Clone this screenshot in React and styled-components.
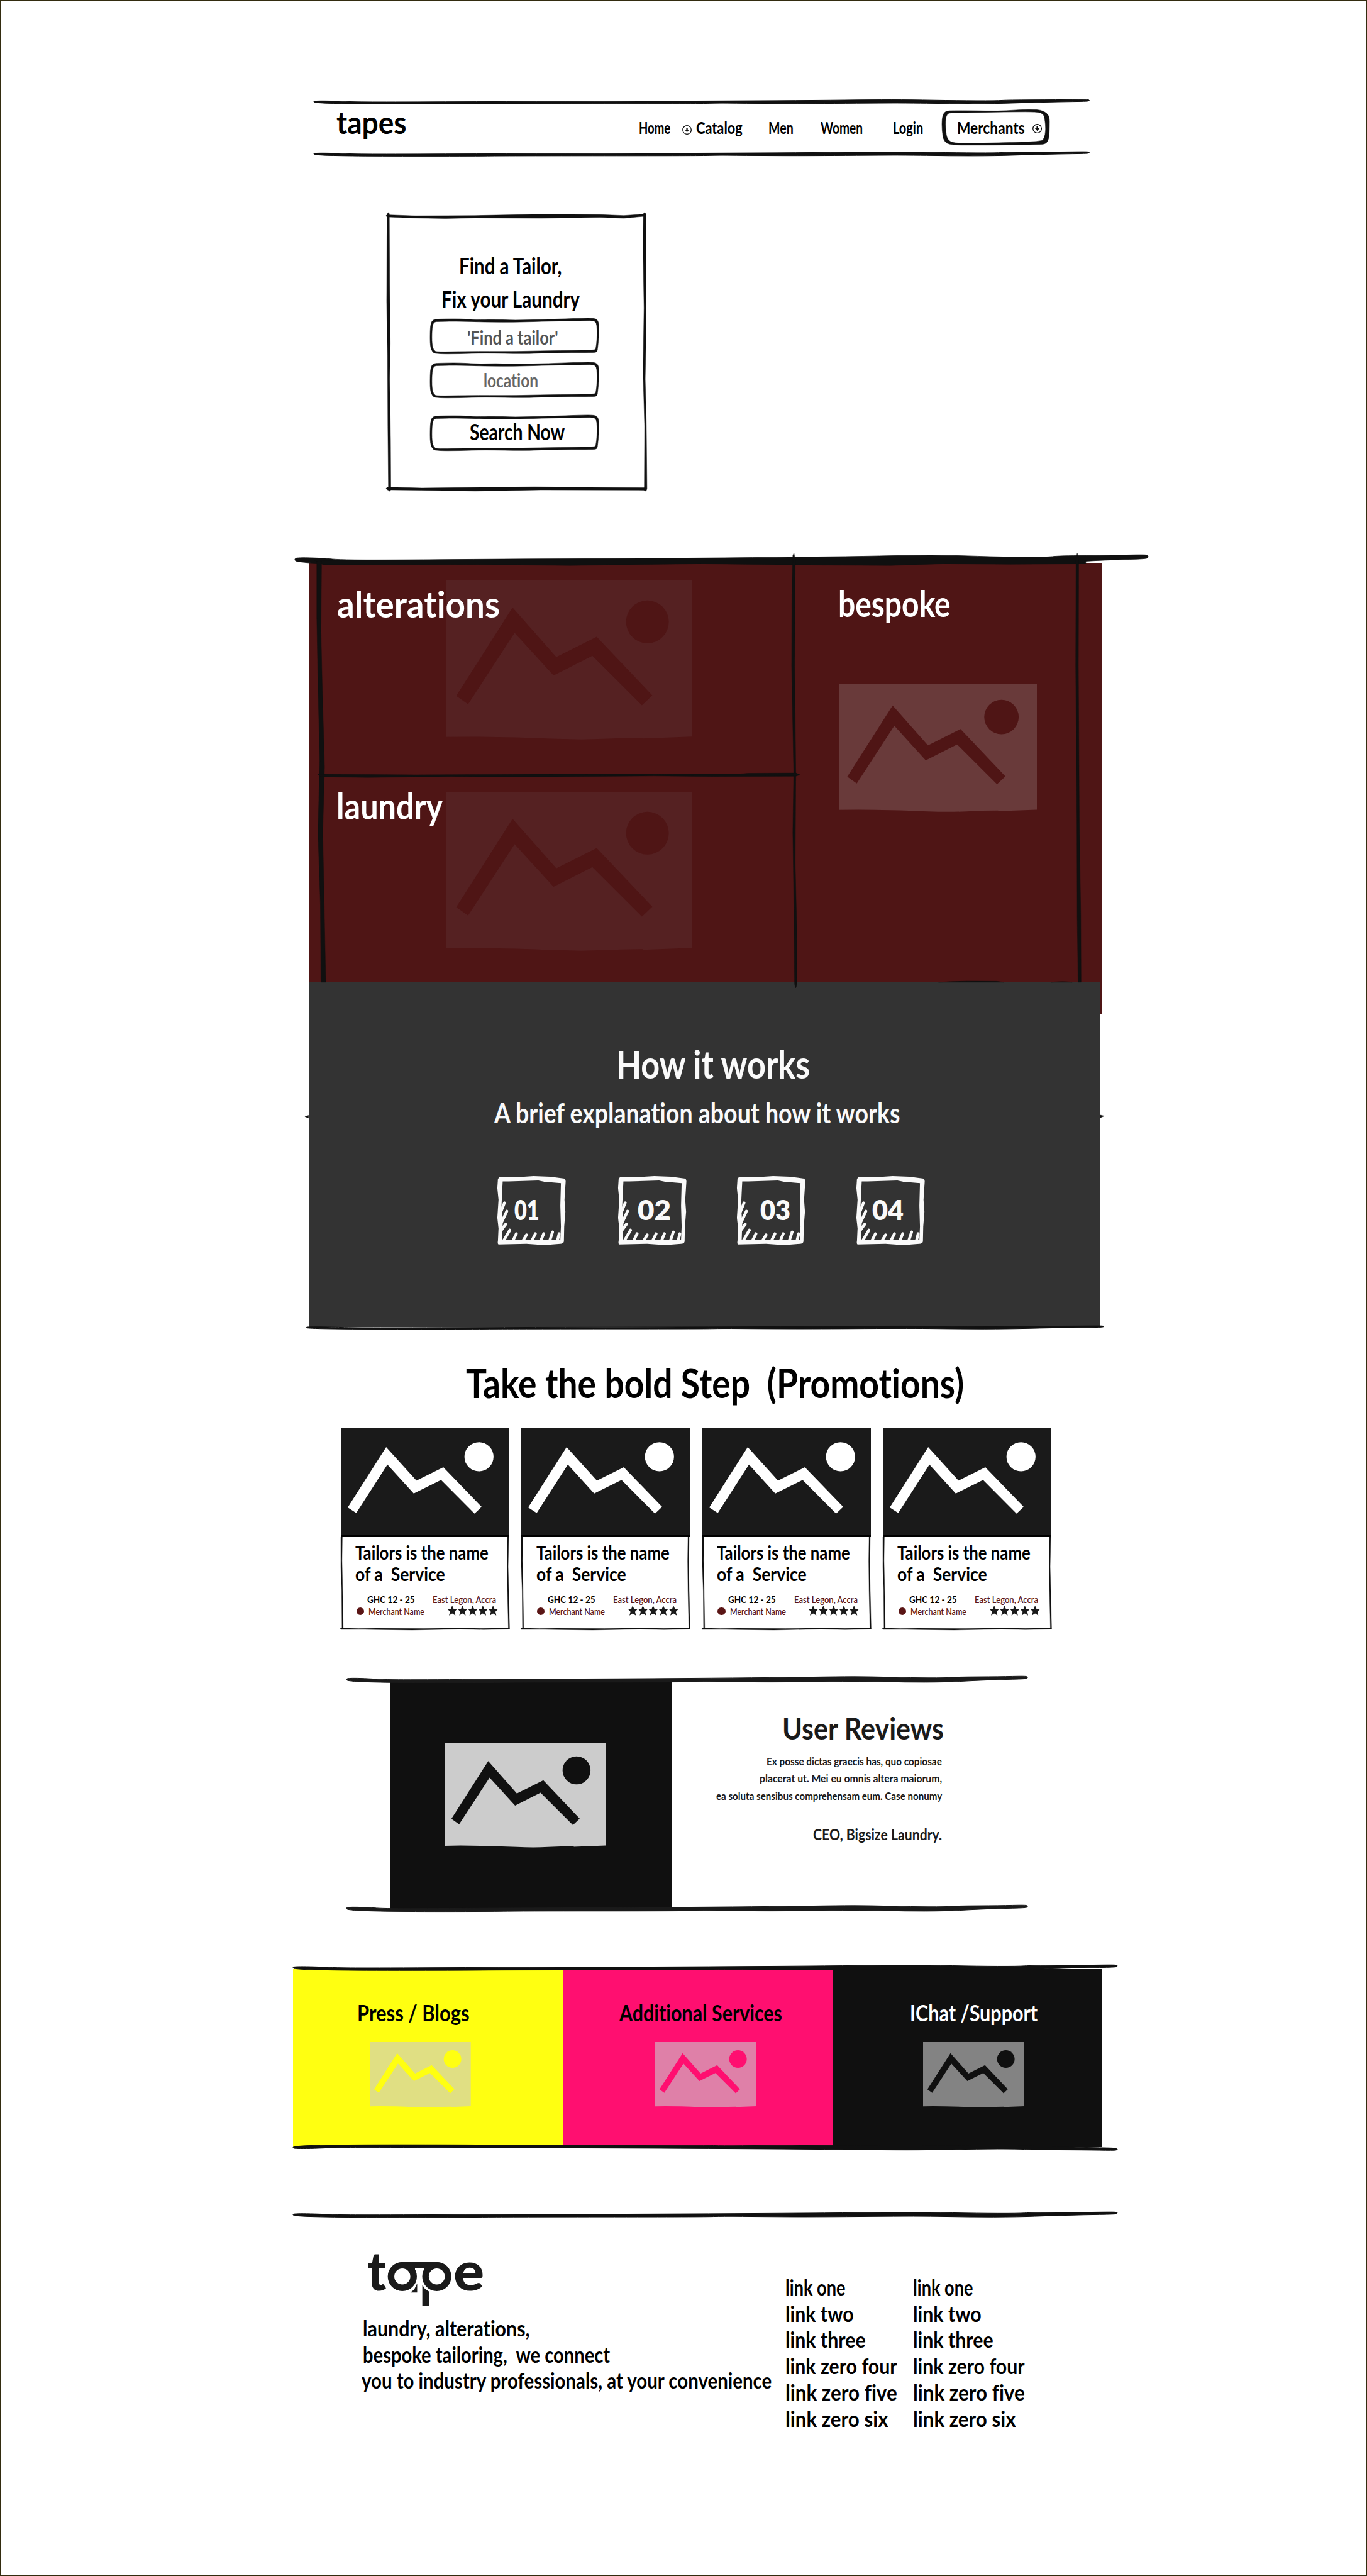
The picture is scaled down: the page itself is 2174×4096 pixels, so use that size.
import React, { useLayoutEffect, useRef, useState } from "react";
import styled, { createGlobalStyle } from "styled-components";

const INK = "#101010";
const MAROON = "#4f1515";
const u = (n) => `${n / 10}rem`;

const GlobalStyle = createGlobalStyle`
  html { font-size: 9.4515px; }
  body {
    margin: 0;
    background: #fff;
    font-family: Lato, "Open Sans", sans-serif;
    font-variant-ligatures: none;
    color: #000;
  }
  h2, h3, p { margin-bottom: 0; }
  * { box-sizing: border-box; }
`;

/* ---------- text ---------- */

const LabelBox = styled.div`
  flex: none;
  width: ${(p) => u(p.$w)};
  height: ${(p) => u(p.$lh)};
  line-height: ${(p) => u(p.$lh)};
  margin-left: ${(p) => u(p.$ml || 0)};
  margin-top: ${(p) => u(p.$mt || 0)};
  margin-right: ${(p) => u(p.$mr || 0)};
  font-size: ${(p) => u(p.$size)};
  font-weight: ${(p) => p.$weight || 700};
  color: ${(p) => p.$color || "#000"};
  white-space: pre;
  position: relative;
  z-index: 1;
`;

const LabelInk = styled.span`
  display: inline-block;
  transform-origin: 0 50%;
`;

function Label({ children, w, lh, size, ml, mt, mr, weight, color, as }) {
  const box = useRef(null);
  const ink = useRef(null);
  const [scale, setScale] = useState(1);
  useLayoutEffect(() => {
    const target = box.current.getBoundingClientRect().width;
    ink.current.style.transform = "none";
    const natural = ink.current.getBoundingClientRect().width;
    ink.current.style.transform = `scaleX(${target / natural})`;
    setScale(target / natural);
  }, [children, w]);
  return (
    <LabelBox ref={box} as={as} $w={w} $lh={lh} $size={size} $ml={ml} $mt={mt} $mr={mr} $weight={weight} $color={color}>
      <LabelInk ref={ink} style={{ transform: `scaleX(${scale})` }}>
        {children}
      </LabelInk>
    </LabelBox>
  );
}

/* ---------- hand-drawn strokes ---------- */

function smooth(points) {
  const n = points.length;
  const mid = (a, b) => [(a[0] + b[0]) / 2, (a[1] + b[1]) / 2];
  const start = mid(points[n - 1], points[0]);
  let d = `M${start[0]} ${start[1]}`;
  for (let i = 0; i < n; i++) {
    const m = mid(points[i], points[(i + 1) % n]);
    d += `Q${points[i][0]} ${points[i][1]} ${m[0]} ${m[1]}`;
  }
  return d + "Z";
}

const STROKE = smooth([
  [0, 4], [3, 3.2], [15, 3], [38, 4], [50, 5], [90, 5.5], [250, 4.5], [400, 4], [540, 3], [650, 2], [720, 0.8],
  [770, 0.8], [830, 2.5], [880, 2.7], [895, 1.2], [960, 0.8], [996, 0], [1000, 1], [1000, 3], [997, 4.4],
  [960, 5.2], [920, 6.8], [880, 9], [820, 9.2], [760, 7.4], [640, 9], [570, 8.6], [520, 7.8], [500, 9],
  [250, 9], [210, 9.7], [80, 9.8], [20, 8.6], [3, 7], [0, 6],
]);

const INPUT_OUTLINE =
  smooth([
    [6, 2], [14, 1.5], [40, 1], [60, 1.5], [85, 3], [110, 2], [140, 3.5], [200, 2], [255, 0], [276, 0], [282, 3],
    [284, 10], [284, 30], [282, 50], [281, 57], [275, 58], [200, 58], [160, 60], [90, 58.5], [50, 60], [10, 60],
    [4, 57], [0, 47], [0, 20], [1.5, 7],
  ]) +
  smooth([
    [8, 6], [14, 5.6], [50, 5], [90, 6.4], [150, 6.6], [200, 5], [262, 4], [276, 4], [280, 8], [281, 18], [281, 35],
    [279, 51], [277, 54], [200, 54.6], [140, 56], [60, 55.6], [12, 57], [6, 54], [3, 44], [3, 20], [5, 9],
  ]);

const PILL_OUTLINE =
  smooth([
    [8, 2.5], [18, 2], [50, 2], [95, 3], [130, 0.5], [160, 0], [172, 3], [181, 11], [181, 30], [180, 50], [175, 58],
    [165, 59], [100, 60], [50, 60], [15, 60], [3, 54], [0, 35], [0, 15], [3, 6],
  ]) +
  smooth([
    [12, 6], [20, 5.5], [60, 5], [120, 4], [160, 4], [170, 7], [173, 14], [175, 35], [172, 49], [167, 54], [100, 56],
    [55, 57], [20, 57], [9, 51], [6, 35], [6, 15], [9, 8],
  ]);

const RuleSvg = styled.svg`
  display: block;
  flex: none;
  position: relative;
  z-index: 2;
  overflow: visible;
  width: ${(p) => (p.$w ? u(p.$w) : "100%")};
  height: ${(p) => u(p.$h)};
  margin-top: ${(p) => u(p.$mt || 0)};
  margin-left: ${(p) => u(p.$ml || 0)};
  transform: ${(p) => (p.$flip ? "scaleY(-1)" : "none")};
`;

function Rule({ h, w, mt, ml, flip, color = INK }) {
  return (
    <RuleSvg viewBox="0 0 1000 10" preserveAspectRatio="none" $h={h} $w={w} $mt={mt} $ml={ml} $flip={flip}>
      <path d={STROKE} fill={color} stroke={color} strokeWidth="1" strokeLinejoin="round" vectorEffect="non-scaling-stroke" />
    </RuleSvg>
  );
}

const Outline = styled.svg`
  position: absolute;
  inset: 0;
  width: 100%;
  height: 100%;
  overflow: visible;
  pointer-events: none;
`;

const FrameOutline = ({ viewBox, d }) => (
  <Outline viewBox={viewBox}>
    <path d={d} fill={INK} fillRule="evenodd" stroke={INK} strokeWidth="0.6" />
  </Outline>
);

const PictureSvg = styled.svg`
  display: block;
  flex: none;
  width: ${(p) => u(p.$w)};
  height: ${(p) => u((p.$w * 216) / 334)};
  margin-left: ${(p) => u(p.$ml || 0)};
  margin-top: ${(p) => u(p.$mt || 0)};
`;

const PEAKS = "90.6,36.7 150,104 204.8,76.5 280.3,156 266.2,169.4 199,102.3 146.3,129 93.4,71 30.2,168 14.2,156.6";

function Picture({ w, ml, mt, back, ink }) {
  return (
    <PictureSvg viewBox="0 0 334 216" $w={w} $ml={ml} $mt={mt}>
      <path d="M0 0H334V212L268 214.5V213.6Q240 213.6 215 215Q185 216.4 150 215Q60 211 0 212.4Z" fill={back} />
      <polygon points={PEAKS} fill={ink} />
      <circle cx="273.7" cy="56.2" r="29" fill={ink} />
    </PictureSvg>
  );
}

/* ---------- page ---------- */

const Page = styled.main`
  width: 100%;
  height: 4096px;
  overflow: hidden;
  border: 2px solid #332c0f;
  background: #fff;
  padding-top: ${u(165.5)};
  display: flex;
  flex-direction: column;
  align-items: flex-start;
`;

const Section = styled.section`
  flex: none;
  display: flex;
  flex-direction: column;
  width: ${(p) => u(p.$w)};
  margin-left: ${(p) => u(p.$x - 2.6)};
  margin-top: ${(p) => u(p.$mt || 0)};
`;

/* header */
const NavRow = styled.nav`
  display: flex;
  align-items: center;
  height: ${u(79)};
`;

const Pill = styled.div`
  position: relative;
  display: flex;
  align-items: center;
  flex: none;
  width: ${u(181)};
  height: ${u(61)};
  margin-left: ${u(32)};
  padding-left: ${u(25)};
`;

const ArrowSvg = styled.svg`
  flex: none;
  width: ${u(16)};
  height: ${u(16)};
  margin-left: ${(p) => u(p.$ml)};
  margin-top: ${(p) => u(p.$mt || 0)};
`;

const DownCircle = ({ ml, mt }) => (
  <ArrowSvg viewBox="0 0 16 16" $ml={ml} $mt={mt}>
    <circle cx="8" cy="8" r="7.200" fill="none" stroke={INK} strokeWidth="1.4" />
    <path d="M6.8 4.2h2.400v3.200h2.600L8 11.800 4.200 7.400h2.600z" fill={INK} />
  </ArrowSvg>
);

const NAV = [
  ["Catalog", 78, 7.5],
  ["Men", 42, 44],
  ["Women", 71, 45],
  ["Login", 51, 51],
];

function Header() {
  return (
    <Section as="header" $x={528} $w={1305}>
      <Rule h={8} />
      <NavRow>
        <Label w={118} lh={60} size={52} ml={39} mt={-20}>tapes</Label>
        <Label w={53} lh={30} size={28} ml={390}>Home</Label>
        <DownCircle ml={20.5} mt={6} />
        {NAV.map(([t, w, ml]) => (
          <Label key={t} w={w} lh={30} size={28} ml={ml}>{t}</Label>
        ))}
        <Pill>
          <FrameOutline viewBox="0 0 181 61" d={PILL_OUTLINE} />
          <Label w={114} lh={30} size={28}>Merchants</Label>
          <DownCircle ml={12.5} mt={2} />
        </Pill>
      </NavRow>
      <Rule h={8} />
    </Section>
  );
}

/* search */
const SearchCard = styled.form`
  position: relative;
  display: flex;
  flex-direction: column;
  align-items: center;
  height: ${u(470)};
  padding: ${u(62)} ${u(7)} 0 0;
`;

const Field = styled.div`
  position: relative;
  display: flex;
  align-items: center;
  justify-content: center;
  width: ${u(284)};
  height: ${u(60)};
  margin-top: ${(p) => u(p.$mt)};
`;

function SketchField({ mt, children }) {
  return (
    <Field $mt={mt}>
      <FrameOutline viewBox="0 0 284 60" d={INPUT_OUTLINE} />
      {children}
    </Field>
  );
}

function Search() {
  return (
    <Section $x={650} $w={439} $mt={95.5}>
      <SearchCard>
        <Outline viewBox="0 0 439 470">
          <g fill={INK} stroke={INK} strokeWidth="0.5">
            <path d="M0 5Q1 3 6 4L50 5.500L150 5L260 3L360 3.500L400 5L437 2.500V6L400 9.500L360 8L260 9.500L150 9L100 10L40 9L6 7.500Q0 8 0 5Z" />
            <path d="M0 464Q2 461 8 462L60 463.500L250 461.500L300 462L435 463L436 467L260 466.500L150 468.500L60 467L8 466.500Q1 468 0 464Z" />
            <path d="M3.500 0Q6 0 5.500 6L6 120L7 220L6 280L7.500 380L8 466Q6 471 4 467L3 360L2.500 240L1 150L1.500 40L2 2Z" />
            <path d="M434.500 0Q437.500 0 437.500 6L437 110L437.500 200L436 280L438 360L439 465Q437 471 434.500 467L435 360L432.500 270L434 160L432.500 60L433 2Z" />
          </g>
        </Outline>
        <Label w={173} lh={56} size={38} mr={13}>Find a Tailor,</Label>
        <Label w={233} lh={56} size={38} mr={13}>Fix your Laundry</Label>
        <SketchField mt={3}><Label w={153} lh={40} size={32} mt={6} mr={5} color="#555">'Find a tailor'</Label></SketchField>
        <SketchField mt={14}><Label w={92} lh={40} size={32} mt={2} mr={12} color="#666">location</Label></SketchField>
        <SketchField mt={29}><Label w={160} lh={40} size={38} mt={-3} mr={-9}>Search Now</Label></SketchField>
      </SearchCard>
    </Section>
  );
}

/* services */
const ServiceGrid = styled.div`
  position: relative;
  display: grid;
  grid-template-columns: ${u(814)} 1fr;
  grid-template-rows: ${u(357.5)} ${u(402)};
  background: ${MAROON};
  box-shadow: 0.1rem 0 0 #d9a98c;
`;

const Tile = styled.article`
  display: grid;
  align-items: start;
  justify-items: start;
  grid-row: ${(p) => (p.$tall ? "1 / 3" : "auto")};
  grid-column: ${(p) => (p.$tall ? 2 : 1)};
  > * { grid-area: 1 / 1; }
`;

const SketchLines = styled(Outline)`
  z-index: 3;
`;

function Services() {
  return (
    <Section $x={521.5} $w={1332.5} $mt={118.5}>
      <ServiceGrid>
        <Tile>
          <Picture w={414} ml={229.5} mt={29.5} back="#552122" ink={MAROON} />
          <Label as="h2" w={274} lh={80} size={61} ml={46} mt={29} color="#fff">alterations</Label>
        </Tile>
        <Tile>
          <Picture w={414} ml={229.5} mt={28} back="#552122" ink={MAROON} />
          <Label as="h2" w={179} lh={80} size={61} ml={45.5} mt={11.5} color="#fff">laundry</Label>
        </Tile>
        <Tile $tall>
          <Label as="h2" w={189} lh={80} size={61} ml={75.5} mt={28} color="#fff">bespoke</Label>
          <Picture w={334} ml={76} mt={203.5} back="#693a3a" ink={MAROON} />
        </Tile>
        <SketchLines viewBox="521.5 946.5 1332.500 759.500">
          <g fill={INK} stroke={INK} strokeWidth="0.5">
            <path d={STROKE} transform="translate(497 932.500) scale(1.436 1.700)" />
            <path d="M530 942L1820 940L1828 943V948L1700 949L1590 948L1500 951L1330 950L1180 948L960 951L760 949L545 950Z" />
            <path d="M534 944H542L541 1060L543 1150L547 1290L544 1400L546 1500L549 1652H541L540 1520L536 1400L539 1280L536 1150L534 1040Z" />
            <path d="M1337 930L1339 942L1338 1120L1340 1300L1339 1450L1342 1580L1341.500 1655Q1340 1668 1338 1655L1337 1540L1335 1400L1336.500 1300L1333 1120L1333.500 1000L1335 934Z" />
            <path d="M1813.500 930L1816 942L1815.500 1120L1817 1380L1819.500 1540L1820 1652H1815L1813.500 1540L1813 1380L1811 1120L1811.500 942Z" />
            <path d="M536 1302L700 1303L900 1302L1100 1301.500L1240 1302L1260 1300.500L1340 1300L1347 1303L1340 1305.500L1200 1306L1100 1305L900 1306.500L760 1306L620 1307.500L540 1306.500Z" />
            <path d="M1580 1652Q1630 1649 1678 1650.500L1690 1652ZM1770 1652Q1790 1650 1805 1652Z" />
            <path d="M514 1878L520 1876V1880.500ZM1859 1877L1852.500 1875.500V1880Z" />
          </g>
        </SketchLines>
      </ServiceGrid>
    </Section>
  );
}

/* how it works */
const Steps = styled.div`
  position: relative;
  z-index: 2;
  display: flex;
  flex-direction: column;
  height: ${u(580)};
  padding-top: ${u(98)};
  background: #333;
`;

const StepRow = styled.ol`
  display: flex;
  list-style: none;
  padding: 0;
  margin: ${u(77)} 0 0 ${u(316.5)};
`;

const Step = styled.li`
  position: relative;
  flex: none;
  display: flex;
  align-items: center;
  width: ${u(116)};
  height: ${u(116)};
  margin-right: ${(p) => u(p.$gap)};
`;

const STEPS = [
  ["01", 30, 42, 88],
  ["02", 33, 56, 84],
  ["03", 40, 51, 84],
  ["04", 28, 53, 0],
];

function HowItWorks() {
  return (
    <>
      <Section $x={519.5} $w={1333} $mt={-54}>
        <Steps>
          <Label as="h2" w={326} lh={80} size={65} ml={517.5} color="#fafafa">How it works</Label>
          <Label as="p" w={683} lh={60} size={47} ml={312.5} mt={12} color="#fafafa">A brief explanation about how it works</Label>
          <StepRow>
            {STEPS.map(([n, ml, w, gap]) => (
              <Step key={n} $gap={gap}>
                <Outline viewBox="0 0 116 116">
                  <path
                    fill="#fafafa"
                    fillRule="evenodd"
                    d="M4 2L30 2L62 0L90 1L112 4Q116 4 116 9L114 40L115.500 60L113.500 85L113 110Q112 114 107 114L80 116L50 114L3 115Q1 114 2 109L3 88L1 70L3 40L1 20L2 5ZM10 9L9 28L8 50L10 80L9 108L50 107L80 108L107 107L108 85L107 50L108 12L80 9.500L70 7.500L20 9Z"
                  />
                  <path
                    stroke="#fafafa"
                    strokeWidth="4.800"
                    strokeLinecap="round"
                    fill="none"
                    d="M13 45L7 60M17 59L8 78M15 81L7 92M22 91L12 108M33 97L27 109M50 99L44 109M65 97L59 109M79 97L74 109M94 94L89 109M105 97L102 109"
                  />
                </Outline>
                <Label w={w} lh={50} size={45} ml={ml} mt={-3} weight={800} color="#fafafa">{n}</Label>
              </Step>
            ))}
          </StepRow>
        </Steps>
      </Section>
      <Section $x={516} $w={1342} $mt={-1.5}>
        <Rule h={6} />
      </Section>
    </>
  );
}

/* promotions */
const CardRow = styled.div`
  display: flex;
  gap: ${u(20)};
  margin: ${u(36)} 0 0;
`;

const Card = styled.article`
  flex: none;
  width: ${u(284)};
  height: ${u(340)};
`;

const CardArt = styled.div`
  height: ${u(183)};
  background: #1a1a1a;
  border-bottom: ${u(4.5)} solid #000;
`;

const CardArtSvg = styled.svg`
  display: block;
  width: 100%;
  height: ${u(179)};
`;

const CardBody = styled.div`
  position: relative;
  height: ${u(157)};
  padding-top: ${u(9)};
`;

const MetaRow = styled.div`
  display: flex;
  align-items: center;
  height: ${u(20)};
  margin-top: ${(p) => u(p.$mt || 0)};
`;

const Dot = styled.span`
  flex: none;
  width: ${u(13)};
  height: ${u(13)};
  margin-left: ${u(26)};
  border-radius: 50%;
  background: #5a1515;
`;

const Stars = styled.svg`
  flex: none;
  width: ${u(84)};
  height: ${u(20)};
  margin-left: ${u(39)};
  overflow: visible;
`;

const STAR = "7.500,0 10,6.200 15.500,6.800 11.600,11.400 13,18.500 7.500,14.800 2.200,18.500 3.800,11.400 0,6.800 5.200,6.200";

function PromoCard() {
  return (
    <Card>
      <CardArt>
        <CardArtSvg viewBox="0 0 284 179" preserveAspectRatio="none">
          <polygon
            fill="#fff"
            points="76.300,31.700 127.300,88 172.500,65.700 237,132.300 225,143.700 168.700,87 122.700,109.700 78.400,61 26,142.700 11.600,133.300"
          />
          <circle cx="232.500" cy="48" r="24.500" fill="#fff" />
        </CardArtSvg>
      </CardArt>
      <CardBody>
        <Outline viewBox="0 0 284 157">
          <path
            fill={INK}
            stroke={INK}
            strokeWidth="0.4"
            d="M0 0H2.500L2 40L3 90L4 154L2 155L1.500 90L0 50ZM280.500 0H282.500L281.500 50L282.500 90L284 154L282 155L280.500 90L280 40ZM-1 153L30 154L60 153.500L140 154L200 153L240 153.800L284 153L284 155L240 155.800L200 155L120 156.500L40 155.500L0 155.500Z"
          />
        </Outline>
        <Label as="h3" w={224} lh={35.5} size={32} ml={24.5}>Tailors is the name</Label>
        <Label as="h3" w={151} lh={35.5} size={32} ml={24.5}>{"of a  Service"}</Label>
        <MetaRow $mt={15.5}>
          <Label w={80} lh={20} size={17} ml={44}>GHC 12 - 25</Label>
          <Label w={107} lh={20} size={17} ml={30.5} weight={600} color="#5a1515">East Legon, Accra</Label>
        </MetaRow>
        <MetaRow>
          <Dot />
          <Label w={94} lh={20} size={17} ml={7.5} weight={600} color="#5a1515">Merchant Name</Label>
          <Stars viewBox="0 0 84 20">
            {[0, 1, 2, 3, 4].map((i) => (
              <polygon key={i} points={STAR} fill="#1a1a1a" transform={`translate(${i * 17.2} 0) scale(1 0.9)`} />
            ))}
          </Stars>
        </MetaRow>
      </CardBody>
    </Card>
  );
}

function Promotions() {
  return (
    <Section $x={574} $w={1196} $mt={50}>
      <Label as="h2" w={838} lh={80} size={69} ml={211}>{"Take the bold Step  (Promotions)"}</Label>
      <CardRow>
        {[0, 1, 2, 3].map((i) => <PromoCard key={i} />)}
      </CardRow>
    </Section>
  );
}

/* reviews */
const ReviewRow = styled.div`
  display: flex;
  height: ${u(373)};
`;

const ReviewArt = styled.div`
  flex: none;
  width: ${u(473.6)};
  height: ${u(386)};
  margin: ${u(-2)} 0 0 ${u(75)};
  padding: ${u(103.5)} 0 0 ${u(91)};
  background: ${INK};
`;

const ReviewText = styled.div`
  display: flex;
  flex-direction: column;
  align-items: flex-end;
  width: ${u(454)};
  padding-top: ${u(46)};
`;

function Reviews() {
  const c = "#1a1a1a";
  return (
    <Section $x={583} $w={1146} $mt={77.5}>
      <Rule h={11.5} color={c} />
      <ReviewRow>
        <ReviewArt><Picture w={271} back="#ccc" ink={INK} /></ReviewArt>
        <ReviewText>
          <Label as="h2" w={272} lh={60} size={50} mr={-3} color={c}>User Reviews</Label>
          <Label as="p" w={295} lh={29} size={19} mt={11} color={c}>Ex posse dictas graecis has, quo copiosae</Label>
          <Label as="p" w={307} lh={29} size={19} color={c}>placerat ut. Mei eu omnis altera maiorum,</Label>
          <Label as="p" w={380} lh={29} size={19} color={c}>ea soluta sensibus comprehensam eum. Case nonumy</Label>
          <Label as="p" w={217} lh={30} size={26.5} mt={34.5} color={c}>CEO, Bigsize Laundry.</Label>
        </ReviewText>
      </ReviewRow>
      <Rule h={11.5} color={c} />
    </Section>
  );
}

/* channels */
const ChannelRow = styled.div`
  display: flex;
  height: ${u(300)};
  margin-top: ${u(-3)};
`;

const Channel = styled.article`
  flex: none;
  width: ${u(453.7)};
  padding-top: ${u(48.5)};
  background: ${(p) => p.$bg};
`;

const CHANNELS = [
  { t: "Press / Blogs", bg: "#ffff11", ink: "#000", back: "#e0df83", ml: 107.5, w: 189, px: 129.5 },
  { t: "Additional Services", bg: "#ff0f70", ink: "#000", back: "#df80a8", ml: 95.5, w: 274, px: 156 },
  { t: "IChat /Support", bg: INK, ink: "#fff", back: "#838383", ml: 131, w: 215, px: 153 },
];

function Channels() {
  return (
    <Section $x={493.5} $w={1387} $mt={89.5}>
      <Rule h={10} />
      <ChannelRow>
        {CHANNELS.map((c) => (
          <Channel key={c.t} $bg={c.bg}>
            <Label as="h3" w={c.w} lh={50} size={38} ml={c.ml} color={c.ink}>{c.t}</Label>
            <Picture w={170} ml={c.px} mt={24.5} back={c.back} ink={c.bg} />
          </Channel>
        ))}
      </ChannelRow>
      <Rule h={10} mt={-5} flip />
    </Section>
  );
}

/* footer */
const FooterRow = styled.div`
  display: flex;
`;

const Brand = styled.div`
  flex: none;
  width: ${u(829.5)};
  padding: ${u(59)} 0 0 ${u(118.5)};
`;

const Logo = styled.svg`
  display: block;
  width: ${u(195)};
  height: ${u(90)};
  margin: 0 0 ${u(15)} ${u(7)};
  overflow: visible;
  font-family: Lato, sans-serif;
  font-weight: 900;
  font-size: 274px;
`;

const Links = styled.div`
  display: flex;
  flex-direction: column;
  padding-top: ${u(94.5)};
  margin-right: ${u(29)};
`;

const LINKS = [
  ["link one", 101],
  ["link two", 115],
  ["link three", 135],
  ["link zero four", 188],
  ["link zero five", 188],
  ["link zero six", 173],
];

function Footer() {
  return (
    <Section as="footer" $x={493.5} $w={1387} $mt={104}>
      <Rule h={9.5} />
      <FooterRow>
        <Brand>
          <Logo viewBox="58 60 585 270" role="img" aria-label="tape">
            <text x="55" y="252" textLength="96" lengthAdjust="spacingAndGlyphs" fill="#1a1a1a">t</text>
            <g fill="none" stroke="#1a1a1a" strokeWidth="33">
              <circle cx="232" cy="180" r="57" />
              <circle cx="406" cy="180" r="57" />
            </g>
            <g fill="#1a1a1a">
              <rect x="232" y="106" width="174" height="33" />
              <rect x="272" y="130" width="24" height="20" />
              <rect x="342" y="130" width="24" height="20" />
              <polygon points="307,215 307,261 273,261 292,246" />
              <polygon points="333,222 346,242 367,256 367,330 333,330" />
            </g>
            <text x="490" y="252" textLength="156" lengthAdjust="spacingAndGlyphs" fill="#1a1a1a">e</text>
          </Logo>
          <Label as="p" w={281} lh={44} size={36.5} ml={-1}>laundry, alterations,</Label>
          <Label as="p" w={416} lh={44} size={36.5} ml={-1}>{"bespoke tailoring,  we connect"}</Label>
          <Label as="p" w={690} lh={44} size={36.5} ml={-3}>you to industry professionals, at your convenience</Label>
        </Brand>
        {[0, 1].map((col) => (
          <Links key={col}>
            {LINKS.map(([t, w]) => (
              <Label key={t} w={w} lh={44.4} size={36.5} ml={-1.5}>{t}</Label>
            ))}
          </Links>
        ))}
      </FooterRow>
    </Section>
  );
}

export default function App() {
  return (
    <>
      <GlobalStyle />
      <Page>
        <Header />
        <Search />
        <Services />
        <HowItWorks />
        <Promotions />
        <Reviews />
        <Channels />
        <Footer />
      </Page>
    </>
  );
}
